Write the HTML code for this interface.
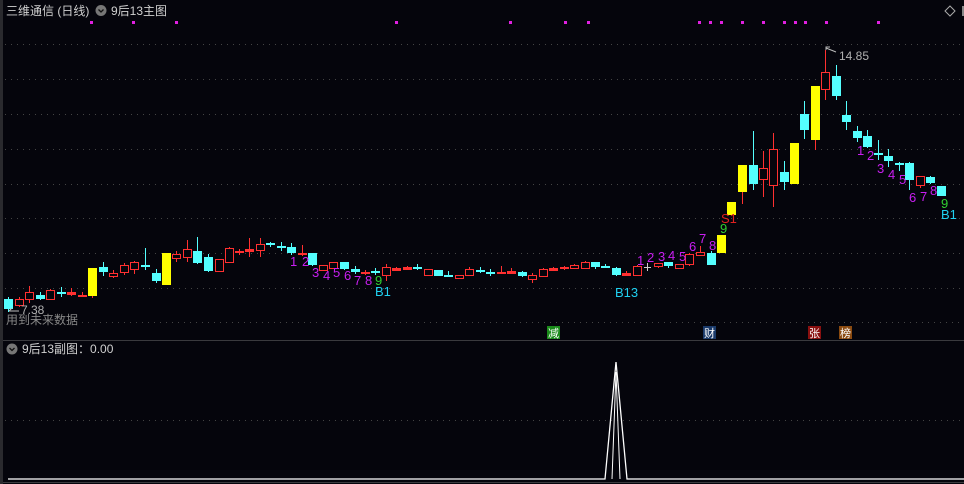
<!DOCTYPE html>
<html><head><meta charset="utf-8"><style>
html,body{margin:0;padding:0;background:#05050c;width:964px;height:484px;overflow:hidden;font-family:"Liberation Sans","Noto Sans CJK SC",sans-serif}
</style></head><body>
<svg id="s" width="964" height="484" xmlns="http://www.w3.org/2000/svg" style="position:absolute;left:0;top:0">
<rect width="964" height="484" fill="#05050c"/>
<rect x="0" y="0" width="3" height="484" fill="#2a2a2e"/>
<line x1="3" y1="340.5" x2="964" y2="340.5" stroke="#3a3a3e"/>
<line x1="3" y1="482.5" x2="964" y2="482.5" stroke="#3a3a3e"/>
<g id="grid" stroke="#444" stroke-dasharray="1,5"></g>
<text x="6" y="15" fill="#d0d0d0" font-size="12">三维通信 (日线)</text>
<circle cx="101" cy="10.5" r="5.5" fill="#777"/><path d="M98.5 9.5 L101 12 L103.5 9.5" stroke="#111" fill="none" stroke-width="1.3"/>
<text x="111" y="15" fill="#d0d0d0" font-size="12">9后13主图</text>
<path d="M950 6 L955 11 L950 16 L945 11 Z" fill="none" stroke="#aaa"/>
<rect x="962" y="6" width="2" height="10" fill="#888"/>
<g id="dots" fill="#e020e0"></g>
<g id="c" shape-rendering="crispEdges"></g>
<g id="lab" font-size="13"></g>
<path d="M826 50 L826 47 L830 47 M826 48 L836 52" stroke="#bbb" fill="none"/>
<text x="839" y="60" fill="#b0b0b0" font-size="12">14.85</text>
<path d="M9 311 L19 311 M9 311 L12 308" stroke="#bbb" fill="none"/>
<text x="21" y="314" fill="#b0b0b0" font-size="12">7.38</text>
<text x="6" y="324" fill="#888" font-size="12">用到未来数据</text>
<rect x="547" y="326" width="13" height="13" fill="#1a8a1a"/><text x="548" y="337" fill="#fff" font-size="11">减</text>
<rect x="703" y="326" width="13" height="13" fill="#1a3a6a"/><text x="704" y="337" fill="#fff" font-size="11">财</text>
<rect x="808" y="326" width="13" height="13" fill="#8a1010"/><text x="809" y="337" fill="#fff" font-size="11">张</text>
<rect x="839" y="326" width="13" height="13" fill="#8a4a10"/><text x="840" y="337" fill="#fff" font-size="11">榜</text>
<circle cx="12" cy="349" r="5.5" fill="#777"/><path d="M9.5 348 L12 350.5 L14.5 348" stroke="#111" fill="none" stroke-width="1.3"/>
<text x="22" y="353" fill="#d0d0d0" font-size="12">9后13副图：0.00</text>
<line x1="5" y1="420.5" x2="964" y2="420.5" stroke="#444" stroke-dasharray="1,5"/>
<path d="M8 479 L605 479 L616 362 L627 479 L964 479" stroke="#fff" fill="none" stroke-width="1.3"/>
<path d="M612 479 L616 372 L620 479" stroke="#fff" fill="none" stroke-width="1"/>
</svg>
<script>
var NS="http://www.w3.org/2000/svg";
function el(p,t,a){var e=document.createElementNS(NS,t);for(var k in a)e.setAttribute(k,a[k]);p.appendChild(e);return e;}
var g=document.getElementById('grid');
[44,79,114,149,184,218,253,288].forEach(function(y){el(g,'line',{x1:5,y1:y+.5,x2:964,y2:y+.5});});
el(g,'line',{x1:82,y1:322.5,x2:964,y2:322.5});
var d=document.getElementById('dots');
[91,133,176,396,510,565,588,699,710,721,742,763,784,795,805,826,878].forEach(function(x){el(d,'rect',{x:x-1,y:21,width:3,height:3});});
var C=[[8,299,309,297,312,'c'],[19,299,305,297,307,'r'],[29,292,299,286,303,'r'],[40,295,299,292,300,'c'],[50,290,299,289,300,'r'],[61,292,293,287,297,'c'],[71,292,294,288,296,'r'],[82,295,296,292,297,'r'],[92,268,296,268,298,'y'],[103,267,272,262,276,'c'],[113,273,276,270,278,'r'],[124,265,272,263,275,'r'],[134,262,269,261,274,'r'],[145,265,267,248,270,'c'],[156,273,281,269,283,'c'],[166,253,285,253,285,'y'],[176,254,258,251,262,'r'],[187,249,257,240,262,'r'],[197,251,263,237,264,'c'],[208,257,271,254,272,'c'],[219,259,271,259,271,'r'],[229,248,262,247,263,'r'],[239,251,252,249,255,'r'],[249,249,251,238,257,'r'],[260,244,250,238,257,'r'],[270,243,244,242,247,'c'],[281,246,247,242,251,'c'],[291,247,253,243,255,'c'],[302,253,254,245,256,'r'],[312,253,265,253,266,'c'],[323,265,270,265,270,'r'],[333,262,268,262,268,'r'],[344,262,269,262,270,'c'],[355,269,272,266,274,'c'],[365,272,273,270,275,'r'],[375,271,272,268,275,'c'],[386,267,275,264,281,'r'],[396,268,270,267,271,'r'],[407,267,269,266,270,'r'],[417,267,268,264,270,'c'],[428,269,275,269,275,'r'],[438,270,276,270,276,'c'],[448,275,276,271,277,'c'],[459,275,278,275,278,'r'],[469,269,275,267,276,'r'],[480,270,271,267,273,'c'],[490,272,273,269,276,'c'],[501,272,273,266,274,'r'],[511,271,273,268,274,'r'],[522,272,276,271,277,'c'],[532,275,279,273,283,'r'],[543,269,276,268,276,'r'],[553,268,270,267,271,'r'],[564,267,268,266,270,'r'],[574,265,268,264,269,'r'],[585,262,268,261,268,'r'],[595,262,267,262,269,'c'],[605,266,267,264,268,'c'],[616,268,275,267,276,'c'],[626,273,275,271,275,'r'],[637,266,275,265,275,'r'],[647,267,268,263,271,'g'],[658,263,266,263,268,'r'],[668,262,266,262,268,'c'],[679,264,268,264,268,'r'],[689,254,264,253,266,'r'],[700,252,255,246,256,'r'],[711,253,265,251,265,'c'],[721,235,253,235,253,'y'],[731,202,215,202,215,'y'],[742,165,192,165,204,'y'],[753,165,184,131,190,'c'],[763,168,179,151,197,'r'],[773,149,185,133,207,'r'],[784,172,182,161,190,'c'],[794,143,184,143,184,'y'],[804,114,130,101,139,'c'],[815,86,140,86,150,'y'],[825,72,89,50,100,'r'],[836,76,96,65,100,'c'],[846,115,122,101,130,'c'],[857,131,138,126,142,'c'],[867,136,147,130,148,'c'],[878,153,154,140,160,'c'],[888,156,161,149,167,'c'],[899,163,164,162,171,'c'],[909,163,180,162,190,'c'],[920,176,185,176,188,'r'],[930,177,183,176,184,'c'],[941,186,196,186,196,'c']];
var cg=document.getElementById('c');
var col={c:'#54ffff',r:'#ff3030',y:'#ffff00',g:'#ccc'};
C.forEach(function(a){var x=a[0],t=a[1],b=a[2],h=a[3],l=a[4],k=a[5],cl=col[k];
var hh=Math.max(b-t,1);
if(k=='r'){
 el(cg,'rect',{x:x,y:h,width:1,height:Math.max(t-h,0),fill:cl});
 el(cg,'rect',{x:x,y:b,width:1,height:Math.max(l-b,0),fill:cl});
 el(cg,'rect',{x:x-4,y:t,width:9,height:hh+1,fill:cl});
 if(hh>2) el(cg,'rect',{x:x-3,y:t+1,width:7,height:hh-1,fill:'#05050c'});
} else {
 el(cg,'rect',{x:x,y:h,width:1,height:l-h,fill:k=='y'?'#ff3030':cl});
 if(k=='g') el(cg,'rect',{x:x-3,y:t,width:7,height:1,fill:cl});
 else el(cg,'rect',{x:x-4,y:t,width:9,height:hh+(hh<2?1:0),fill:cl});
}
});
var P='#c81ef0';
var L=[[290,266,'1',P],[302,266,'2',P],[312,277,'3',P],[323,280,'4',P],[333,277,'5',P],[344,280,'6',P],[354,285,'7',P],[365,285,'8',P],[375,285,'9','#30d030'],[375,296,'B1','#20d0f0'],
[615,297,'B13','#20d0f0'],
[637,265,'1',P],[647,262,'2',P],[658,261,'3',P],[668,260,'4',P],[679,261,'5',P],[689,251,'6',P],[699,243,'7',P],[709,250,'8',P],[720,233,'9','#30d030'],[721,223,'S1','#e02020'],
[857,155,'1',P],[867,160,'2',P],[877,173,'3',P],[888,179,'4',P],[899,184,'5',P],[909,202,'6',P],[920,201,'7',P],[930,195,'8',P],[941,208,'9','#30d030'],[941,219,'B1','#20d0f0']];
var lg=document.getElementById('lab');
L.forEach(function(a){var t=el(lg,'text',{x:a[0],y:a[1],fill:a[3]});t.textContent=a[2];});
</script>
</body></html>
